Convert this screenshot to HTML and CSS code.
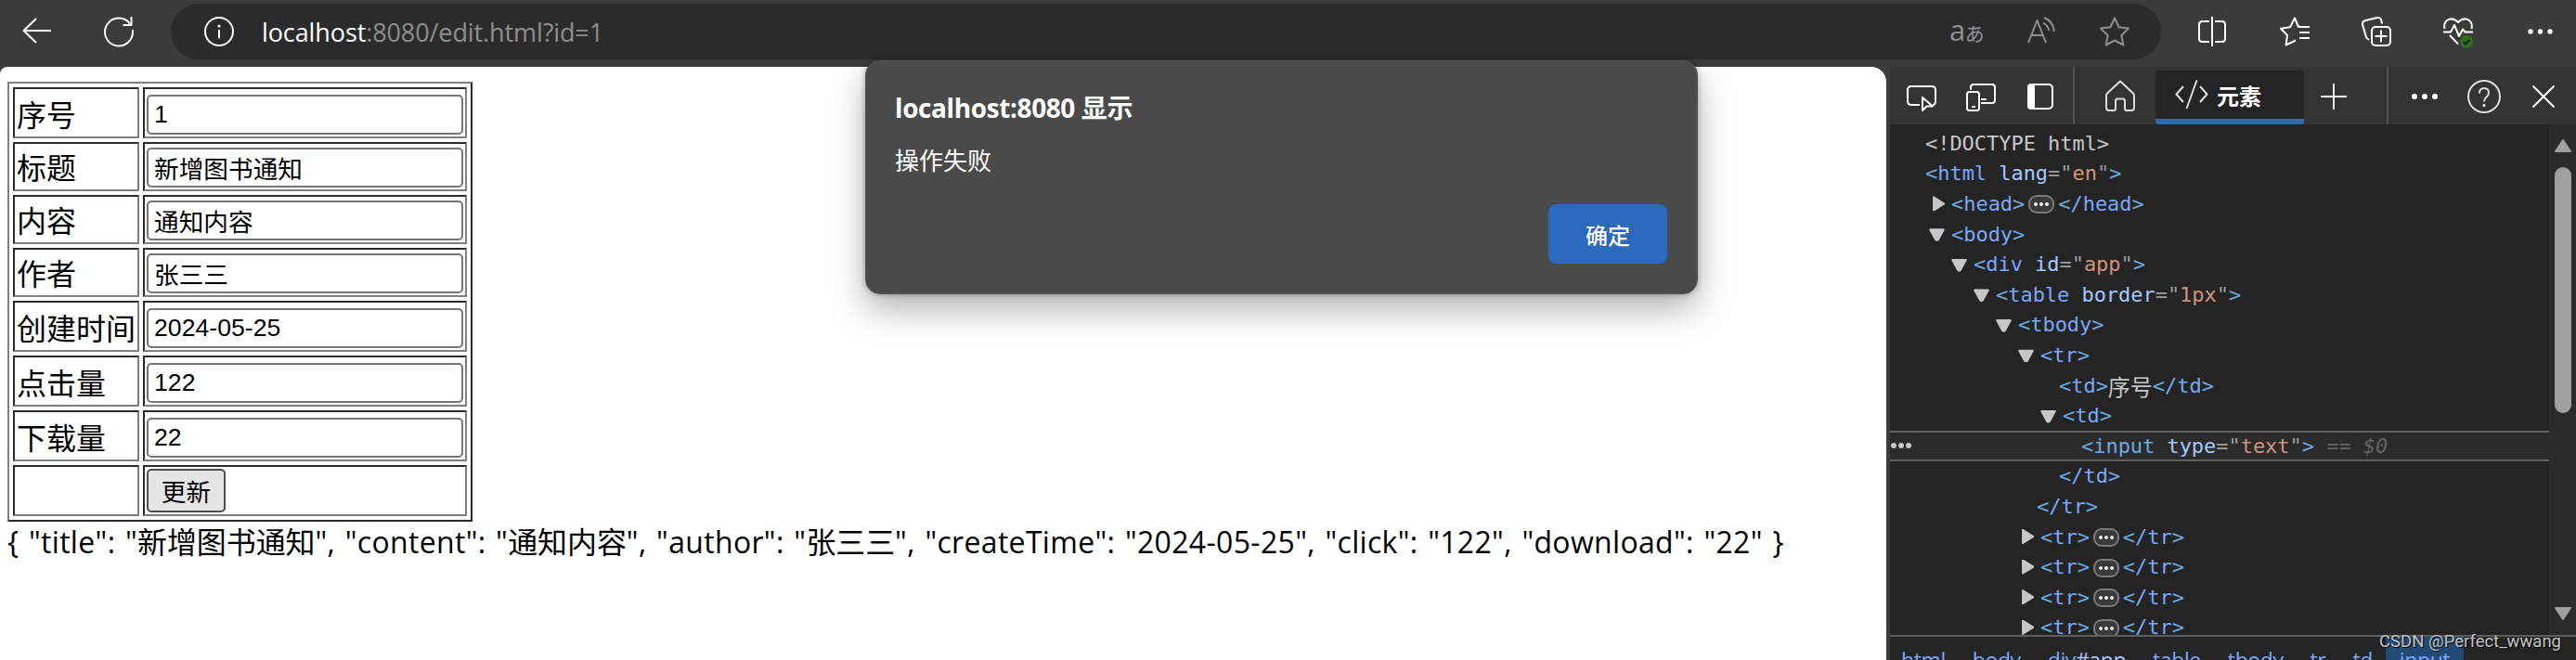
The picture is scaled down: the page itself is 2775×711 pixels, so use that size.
FILE: index.html
```html
<!DOCTYPE html>
<html lang="zh-CN">
<head>
    <meta charset="UTF-8">
    <meta name="viewport" content="width=device-width, initial-scale=1.0">
    <title>edit</title>
    <link rel="stylesheet" href="styles.css">
</head>
<body>
    <!-- 浏览器工具栏 -->
    <div id="toolbar">
        <svg class="icon back" viewBox="0 0 32 32"><path d="M31 15H1M15 2L1.500 15L15 28"/></svg>
        <svg class="icon reload" viewBox="0 0 32 32"><path d="M31 14v2A15 15 0 1 1 28 7.500M29.500 0v9H20.500"/></svg>
        <div id="address">
            <svg class="icon" viewBox="0 0 32 32"><circle cx="16" cy="16" r="15"/><path d="M16 14v9.500"/><circle class="fill" cx="16" cy="10" r="1.600"/></svg>
            <span class="url"><b>localhost</b>:8080/edit.html?id=1</span>
            <div class="address-icons">
                <span class="translate">a<i>あ</i></span>
                <svg class="icon" viewBox="0 0 32 32"><path d="M3 28L12.500 4L22 28M6 20h13M19 6.500Q24 9.500 25.500 15M20 1Q30 5 31 16"/></svg>
                <svg class="icon" viewBox="0 0 32 32"><path d="M16 1.500L20.600 11.200L31 12.600L23.400 20L25.300 30.500L16 25.500L6.700 30.500L8.600 20L1 12.600L11.400 11.200Z"/></svg>
            </div>
        </div>
        <div class="browser-icons">
            <svg class="icon" viewBox="0 0 32 32"><path d="M12 5H4.500Q1 5 1 8.500V23.500Q1 27 4.500 27H12M18 5h7.500Q29 5 29 8.500V23.500Q29 27 25.500 27H18M15 0V32"/></svg>
            <svg class="icon" viewBox="0 0 32 32"><path d="M21 9.500L20 11L16 1.500L11 11.200L1 12.800L8 20L6.500 30.500L17 25.500M21 11h11M21 17h11M21 23h11"/></svg>
            <svg class="icon" viewBox="0 0 32 32"><rect x="11" y="11" width="20" height="20" rx="4"/><path d="M21 14.500v13M14.500 21h13M8 24.500Q5.500 24 5 22L1 8.500Q.500 5.500 3.500 4.300L17 1Q20 .500 21 3L22 7.500"/></svg>
            <svg class="icon" viewBox="0 0 32 36"><path d="M1.500 15Q0 9 4 6Q10 2 16 8Q22 2 28 6Q32 9 30.500 15M0 18.500H8L12 11L17 23L21 15.500L23.500 18.500H32M7 22L16 31.500"/><circle class="ok" cx="25" cy="29" r="7"/><path class="ok-mark" d="M21.500 29L24 31.500L28.500 27"/></svg>
            <svg class="icon" viewBox="0 0 32 32"><g class="fill"><circle cx="6" cy="16" r="2.700"/><circle cx="16.500" cy="16" r="2.700"/><circle cx="27" cy="16" r="2.700"/></g></svg>
        </div>
    </div>

    <div id="content">
        <!-- 页面 -->
        <div id="page">
            <table>
                <tr class="tall"><td>序号</td><td><input type="text" value="1"></td></tr>
                <tr><td>标题</td><td><input type="text" value="新增图书通知"></td></tr>
                <tr><td>内容</td><td><input type="text" value="通知内容"></td></tr>
                <tr><td>作者</td><td><input type="text" value="张三三"></td></tr>
                <tr class="tall"><td>创建时间</td><td><input type="text" value="2024-05-25"></td></tr>
                <tr class="tall"><td>点击量</td><td><input type="text" value="122"></td></tr>
                <tr class="tall"><td>下载量</td><td><input type="text" value="22"></td></tr>
                <tr class="tall"><td></td><td><button>更新</button></td></tr>
            </table>
            <div class="json">{ "title": "<span>新增图书通知</span>", "content": "<span>通知内容</span>", "author": "<span>张三三</span>", "createTime": "2024-05-25", "click": "122", "download": "22" }</div>
        </div>

        <!-- 开发者工具 -->
        <div id="devtools">
            <div class="dev-bar">
                <div class="dev-left">
                    <svg class="icon" viewBox="0 0 32 32"><path d="M14 25H5Q1 25 1 21V9Q1 5 5 5H27Q31 5 31 9V21Q31 25 28 25M17 17V31L21.500 26.500H28Z"/></svg>
                    <svg class="icon" viewBox="0 0 32 32"><rect x="1" y="11" width="13" height="20" rx="2.500"/><path d="M5 9V6Q5 3 8 3H28Q31 3 31 6V20Q31 23 28 23H16M16 19h6M6 27h4"/></svg>
                    <svg class="icon" viewBox="0 0 32 32"><rect x="3" y="3" width="26" height="26" rx="4"/><path class="fill" d="M6 2h4v28H6Q2 30 2 26V6Q2 2 6 2z"/></svg>
                </div>
                <div class="sep"></div>
                <svg class="icon home" viewBox="0 0 32 34"><path d="M16 1.500L29.500 14Q31 15.500 31 17V30Q31 33 28 33H23Q21 33 21 31V23Q21 20.500 19 20.500H13Q11 20.500 11 23V31Q11 33 9 33H4Q1 33 1 30V17Q1 15.500 2.500 14Z"/></svg>
                <div class="tab">
                    <svg class="icon" viewBox="0 0 36 32"><path d="M9 7L1.500 15.500L9 24M27 7L34.500 15.500L27 24M23.500 .500L12.500 31"/></svg>
                    <span>元素</span>
                </div>
                <svg class="icon plus" viewBox="0 0 32 32"><path d="M16 2V30M2 16H30"/></svg>
                <div class="sep far"></div>
                <svg class="icon more" viewBox="0 0 32 32"><g class="fill"><circle cx="5" cy="16" r="3"/><circle cx="16" cy="16" r="3"/><circle cx="27" cy="16" r="3"/></g></svg>
                <svg class="icon help" viewBox="0 0 36 36"><circle cx="18" cy="18" r="17"/><path d="M13 14.500Q13 9 18 9Q23 9 23 14Q23 16.500 20.500 18.500Q18 20.500 18 23.500"/><circle class="fill" cx="18" cy="27.500" r="1.500"/></svg>
                <svg class="icon close" viewBox="0 0 32 32"><path d="M4.500 4.500L27.500 27.500M27.500 4.500L4.500 27.500"/></svg>
            </div>

            <div class="elements">
                <div class="tree">
                    <div class="row l0 leaf"><span class="doc">&lt;!DOCTYPE html&gt;</span></div>
                    <div class="row l0 leaf">&lt;<b>html</b><em> lang</em><u>="</u><q>en</q><u>"</u>&gt;</div>
                    <div class="row l1"><i class="shut"></i>&lt;<b>head</b>&gt;<s></s>&lt;<b>/head</b>&gt;</div>
                    <div class="row l1"><i class="open"></i>&lt;<b>body</b>&gt;</div>
                    <div class="row l2"><i class="open"></i>&lt;<b>div</b><em> id</em><u>="</u><q>app</q><u>"</u>&gt;</div>
                    <div class="row l3"><i class="open"></i>&lt;<b>table</b><em> border</em><u>="</u><q>1px</q><u>"</u>&gt;</div>
                    <div class="row l4"><i class="open"></i>&lt;<b>tbody</b>&gt;</div>
                    <div class="row l5"><i class="open"></i>&lt;<b>tr</b>&gt;</div>
                    <div class="row l6 leaf">&lt;<b>td</b>&gt;<span class="doc cjk">序号</span>&lt;<b>/td</b>&gt;</div>
                    <div class="row l6"><i class="open"></i>&lt;<b>td</b>&gt;</div>
                    <div class="row l7 leaf selected"><svg class="dots" viewBox="0 0 24 8"><circle cx="4" cy="4" r="3"/><circle cx="12" cy="4" r="3"/><circle cx="20" cy="4" r="3"/></svg>&lt;<b>input</b><em> type</em><u>="</u><q>text</q><u>"</u>&gt;<span class="eq"> == $0</span></div>
                    <div class="row l6 leaf">&lt;<b>/td</b>&gt;</div>
                    <div class="row l5 leaf">&lt;<b>/tr</b>&gt;</div>
                    <div class="row l5"><i class="shut"></i>&lt;<b>tr</b>&gt;<s></s>&lt;<b>/tr</b>&gt;</div>
                    <div class="row l5"><i class="shut"></i>&lt;<b>tr</b>&gt;<s></s>&lt;<b>/tr</b>&gt;</div>
                    <div class="row l5"><i class="shut"></i>&lt;<b>tr</b>&gt;<s></s>&lt;<b>/tr</b>&gt;</div>
                    <div class="row l5"><i class="shut"></i>&lt;<b>tr</b>&gt;<s></s>&lt;<b>/tr</b>&gt;</div>
                </div>
                <div class="scrollbar">
                    <svg viewBox="0 0 18 14"><path d="M9 1L17 13H1Z"/></svg>
                    <div class="thumb"></div>
                    <svg class="down" viewBox="0 0 18 14"><path d="M9 13L17 1H1Z"/></svg>
                </div>
            </div>

            <div class="crumbs">
                <span>html</span><span>body</span><span>div<em>#app</em></span><span>table</span><span>tbody</span><span>tr</span><span>td</span><span class="current">input</span>
            </div>
        </div>
    </div>

    <!-- 弹窗 -->
    <div id="dialog">
        <h1>localhost:8080 显示</h1>
        <p>操作失败</p>
        <button>确定</button>
    </div>

    <div id="watermark">CSDN @Perfect_wwang</div>
</body>
</html>
```
FILE: styles.css
```css
* {
    box-sizing: border-box;
}
body {
    margin: 0;
    width: 2775px;
    height: 711px;
    overflow: hidden;
    position: relative;
    display: flex;
    flex-direction: column;
    background: #3b3b3b;
    font-family: "Open Sans", "Noto Sans CJK SC", sans-serif;
}
.icon {
    width: 32px;
    height: 32px;
    flex: none;
    display: block;
    overflow: visible;
    fill: none;
    stroke: #fff;
    stroke-width: 2;
    stroke-linejoin: round;
}
.icon .fill {
    fill: #fff;
    stroke: none;
}

/* 浏览器工具栏 */
#toolbar {
    height: 72px;
    flex: none;
    display: flex;
    align-items: center;
    padding: 0 0 4px 24px;
}
.reload {
    margin-left: 56px;
}
#address {
    width: 2144px;
    height: 60px;
    margin-left: 40px;
    padding: 0 34px 0 36px;
    display: flex;
    align-items: center;
    border-radius: 30px;
    background: #2b2b2b;
}
.url {
    margin-left: 30px;
    font-size: 27px;
    letter-spacing: -0.1px;
    color: #8f8f8f;
    white-space: nowrap;
}
.url b {
    color: #fff;
    font-weight: normal;
}
.address-icons {
    margin-left: auto;
    display: flex;
    align-items: center;
    gap: 48px;
}
.address-icons .icon {
    stroke: #8f8f8f;
}
.translate {
    width: 34px;
    margin-right: -2px;
    font-size: 31px;
    line-height: 32px;
    letter-spacing: -0.5px;
    text-indent: -2px;
    color: #8f8f8f;
    white-space: nowrap;
}
.translate i {
    font-style: normal;
    font-size: 21px;
}
.browser-icons {
    margin-left: 40px;
    display: flex;
    align-items: center;
    gap: 56px;
}
.browser-icons .icon:nth-child(4) {
    height: 36px;
}
.icon .ok {
    fill: #2f6f1f;
    stroke: none;
}
.icon .ok-mark {
    stroke: #222;
}

/* 页面 */
#content {
    flex: 1;
    display: flex;
    min-height: 0;
}
#page {
    width: 2032px;
    flex: none;
    padding: 16px 8px;
    background: #fff;
    border-radius: 8px 16px 0 0;
    color: #000;
}
table {
    border: 2px solid;
    border-color: #808080 #2b2b2b #2b2b2b #808080;
    border-collapse: separate;
    border-spacing: 4px;
    font-size: 32px;
    line-height: 42px;
}
td {
    height: 53px;
    padding: 2px;
    border: 2px solid;
    border-color: #2b2b2b #808080 #808080 #2b2b2b;
    vertical-align: bottom;
}
.tall td {
    height: 55px;
}
td:first-child {
    width: 136px;
    white-space: nowrap;
}
td:last-child {
    width: 349px;
}
td input {
    display: block;
    width: 341px;
    height: 43px;
    padding: 0 6px;
    border: 2px solid #767676;
    border-radius: 5px;
    font-family: "Liberation Sans", "Noto Sans CJK SC", sans-serif;
    font-size: 26.67px;
}
td button {
    display: block;
    width: 85px;
    height: 47px;
    padding: 0;
    border: 2px solid #4f4f4f;
    border-radius: 5px;
    background: #e5e5e5;
    font-family: "Noto Sans CJK SC", sans-serif;
    font-size: 26.67px;
}
.json {
    font-size: 32px;
    line-height: 44px;
    letter-spacing: 0.32px;
    word-spacing: 2px;
    white-space: nowrap;
}
.json span {
    letter-spacing: -0.1px;
}

/* 开发者工具 */
#devtools {
    width: 739px;
    margin-left: 4px;
    display: flex;
    flex-direction: column;
    background: #242424;
}
.dev-bar {
    height: 62px;
    flex: none;
    padding-top: 2px;
    display: flex;
    align-items: center;
    background: #333;
}
.dev-left {
    display: flex;
    gap: 32px;
    padding-left: 18px;
}
.sep {
    width: 2px;
    height: 62px;
    margin: -2px 33px 0 19px;
    background: #515156;
}
.sep.far {
    margin: -2px 23px 0 41px;
}
.home {
    height: 34px;
    margin-top: -2px;
    stroke: #ddd;
}
.tab {
    width: 160px;
    height: 58px;
    margin: 2px 16px 0 22px;
    padding-left: 21px;
    display: flex;
    align-items: center;
    gap: 9px;
    background: #242424;
    border-bottom: 6px solid #2b6abc;
    border-radius: 4px;
    color: #fff;
    font-size: 24px;
    font-weight: bold;
}
.tab .icon {
    width: 36px;
    stroke: #ddd;
}
.help {
    width: 36px;
    height: 36px;
    margin: 0 30px;
    stroke: #ddd;
}
.elements {
    height: 550px;
    flex: none;
    display: flex;
}
.tree {
    width: 710px;
    height: 550px;
    padding-top: 4px;
    overflow: hidden;
    font-family: "DejaVu Sans Mono", "Noto Sans CJK SC", monospace;
    font-size: 22px;
    letter-spacing: -0.04px;
    color: #6ea9df;
}
.row {
    height: 32.6px;
    display: flex;
    align-items: center;
    white-space: pre;
    position: relative;
}
.row b {
    font-weight: normal;
    color: #7ea6f8;
}
.row em {
    font-style: normal;
    color: #a8c7fa;
}
.row u {
    text-decoration: none;
    color: #9e9e9e;
}
.row q {
    quotes: none;
    color: #cf947c;
}
/* 折叠内容 */
.row s {
    width: 28px;
    height: 20px;
    margin: 2px 4px 0;
    border: 2px solid #7a7a7a;
    border-radius: 9px;
    background:
        radial-gradient(circle at 6px 8px, #e8e8e8 1.8px, transparent 2.2px),
        radial-gradient(circle at 12px 8px, #e8e8e8 1.8px, transparent 2.2px),
        radial-gradient(circle at 18px 8px, #e8e8e8 1.8px, transparent 2.2px),
        #3a3a3a;
}
.row i {
    width: 17px;
    height: 16px;
    margin: 0 7px 0 -24px;
    background: #c7c7c7;
}
.open {
    clip-path: polygon(0 20%, 6% 14%, 94% 14%, 100% 20%, 62% 94%, 50% 100%, 38% 94%);
}
.shut {
    clip-path: polygon(24% 0, 32% 0, 100% 45%, 100% 55%, 32% 100%, 24% 100%);
}
.row.leaf {
    margin-left: -4px;
}
.l0 { padding-left: 42px; }
.l1 { padding-left: 66px; }
.l2 { padding-left: 90px; }
.l3 { padding-left: 114px; }
.l4 { padding-left: 138px; }
.l5 { padding-left: 162px; }
.l6 { padding-left: 186px; }
.l7 { padding-left: 210px; }
.doc {
    color: #c7c7c7;
}
.cjk {
    font-size: 24px;
    letter-spacing: 0;
}
.row.selected {
    margin-left: 0;
    padding-left: 206px;
    border-top: 2px solid #616161;
    border-bottom: 2px solid #616161;
    background: #2b2b2b;
}
.row.selected b {
    color: #6ea9df;
}
.dots {
    position: absolute;
    left: 0;
    width: 24px;
    height: 8px;
    fill: #c7c7c7;
}
.eq {
    font-style: italic;
    color: #636363;
}
.scrollbar {
    width: 29px;
    padding: 16px 5px 16px 6px;
    display: flex;
    flex-direction: column;
    background: #2b2b2b;
}
.scrollbar svg {
    width: 18px;
    height: 14px;
    fill: #9f9f9f;
    stroke: #9f9f9f;
    stroke-width: 2;
    stroke-linejoin: round;
}
.thumb {
    height: 265px;
    margin-top: 16px;
    border-radius: 9px;
    background: #9f9f9f;
}
.scrollbar .down {
    margin-top: auto;
}
.crumbs {
    height: 50px;
    flex: none;
    display: flex;
    border-top: 2px solid #5e5e5e;
    color: #7ea6f8;
    font-size: 23px;
    line-height: 50px;
}
.crumbs span {
    padding: 0 14.5px;
    letter-spacing: -0.4px;
}
.crumbs span:first-child {
    padding-left: 12px;
}
.crumbs em {
    font-style: normal;
    color: #a8c7fa;
}
.crumbs .current {
    background: #214a75;
}

/* 弹窗 */
#dialog {
    position: absolute;
    left: 932px;
    top: 65px;
    width: 897px;
    height: 252px;
    padding: 32px 32px 32px 31px;
    display: flex;
    flex-direction: column;
    background: #4a4a4a;
    border: 1px solid #555;
    border-radius: 16px;
    box-shadow: 0 16px 36px rgba(0, 0, 0, 0.3), 0 0 6px rgba(0, 0, 0, 0.3);
    color: #fff;
}
#dialog h1 {
    margin: 0;
    font-size: 28px;
    line-height: 36px;
    letter-spacing: -0.4px;
}
#dialog p {
    margin: 21px 0 0;
    font-size: 26px;
    line-height: 36px;
}
#dialog button {
    width: 128px;
    height: 64px;
    margin: auto 0 0 auto;
    border: none;
    border-radius: 8px;
    background: #2b6abc;
    color: #fff;
    font-family: "Noto Sans CJK SC", sans-serif;
    font-size: 24px;
    font-weight: 500;
}

#watermark {
    position: absolute;
    right: 16px;
    top: 678px;
    font-family: Roboto, sans-serif;
    font-size: 18.5px;
    line-height: 26px;
    color: #c4c4c4;
    text-shadow: 1px 1px 1px #000;
}
```
